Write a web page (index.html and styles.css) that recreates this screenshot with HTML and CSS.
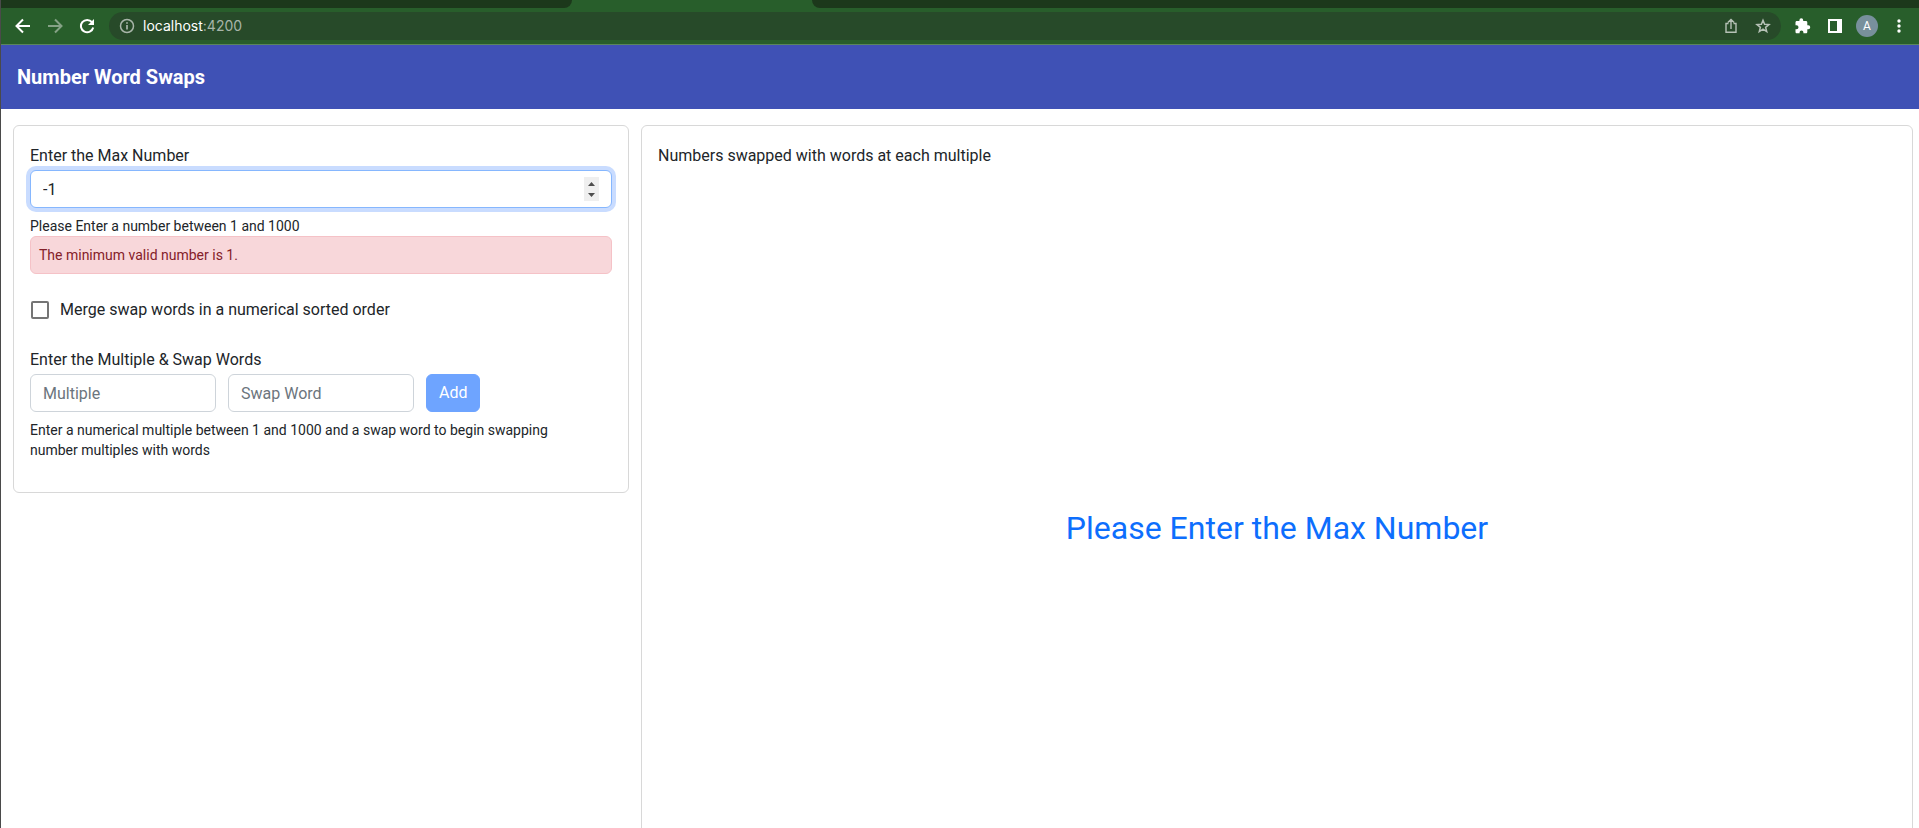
FILE: index.html
```html
<!DOCTYPE html>
<html lang="en">
<head>
<meta charset="utf-8">
<title>Number Word Swaps</title>
<link rel="stylesheet" href="styles.css">
</head>
<body>
<div class="window">
  <div class="tabs"><div class="tabs-before"></div><div class="tabs-after"></div></div>
  <div class="toolbar">
    <div class="nav">
      <button class="tool" aria-label="Back"><svg width="16" height="16" viewBox="0 0 16 16"><path d="M15 8H2M8 1.500 1.500 8 8 14.500" fill="none" stroke="#fff" stroke-width="2"/></svg></button>
      <button class="tool" aria-label="Forward"><svg width="16" height="16" viewBox="0 0 16 16"><path d="M1 8H14M8 1.500 14.500 8 8 14.500" fill="none" stroke="#85a286" stroke-width="2"/></svg></button>
      <button class="tool" aria-label="Reload"><svg width="16" height="16" viewBox="0 0 16 16"><path d="M13 4.200A6.200 6.200 0 1 0 14.200 9.500" fill="none" stroke="#fff" stroke-width="2"/><path d="M15 1V7H9Z" fill="#fff"/></svg></button>
    </div>
    <div class="address">
      <svg width="16" height="16" viewBox="0 0 16 16"><circle cx="8" cy="8" r="6.500" fill="none" stroke="#a8b5a9" stroke-width="1.500"/><path d="M8 7V11.500M8 4.200V5.800" stroke="#a8b5a9" stroke-width="1.700"/></svg>
      <span class="url">localhost<span class="port">:4200</span></span>
      <button class="tool" aria-label="Share"><svg width="16" height="16" viewBox="-1 0 16 16"><path d="M4.500 5.500H2V14.300H12V5.500H9.500M7 11V2M3.800 4.600 7 1.500 10.200 4.600" fill="none" stroke="#b6c1b6" stroke-width="1.400"/></svg></button>
      <button class="tool" aria-label="Bookmark"><svg width="16" height="16" viewBox="0 0 16 16"><path d="M8 2.200 9.600 6.200 14 6.500 10.600 9.300 11.700 13.600 8 11.200 4.300 13.600 5.400 9.300 2 6.500 6.400 6.200Z" fill="none" stroke="#b6c1b6" stroke-width="1.500"/></svg></button>
    </div>
    <div class="extras">
      <button class="tool" aria-label="Extensions"><svg width="16" height="16" viewBox="0 0 16 16"><path d="M13.300 7.300h-1V4.500c0-.8-.6-1.400-1.400-1.400H8.200V2.200a1.900 1.900 0 0 0-3.800 0v.9H1.900C1.100 3.100.5 3.700.5 4.500v2.700h1a2 2 0 0 1 0 4h-1v2.700c0 .8.600 1.400 1.400 1.400h2.700v-1a1.900 1.900 0 0 1 3.800 0v1h2.500c.8 0 1.400-.6 1.400-1.400v-2.700h1a1.950 1.950 0 0 0 0-3.900Z" fill="#fff"/></svg></button>
      <button class="tool" aria-label="Side panel"><svg width="14" height="14" viewBox="0 0 14 14"><path d="M0 0H14V14H0ZM2 2V12H9V2Z" fill="#fff" fill-rule="evenodd"/></svg></button>
      <button class="avatar" aria-label="Profile A">A</button>
      <button class="tool" aria-label="Menu"><svg width="4" height="16" viewBox="0 0 4 16"><circle cx="2" cy="3" r="1.700" fill="#fff"/><circle cx="2" cy="8" r="1.700" fill="#fff"/><circle cx="2" cy="13" r="1.700" fill="#fff"/></svg></button>
    </div>
  </div>
  <header class="app-bar"><h1 class="app-title">Number Word Swaps</h1></header>
  <main class="content">
    <form class="card">
      <label class="label" for="max">Enter the Max Number</label>
      <div class="number-field">
        <input class="field field-focus" id="max" type="number" value="-1">
        <svg class="spinner" width="15" height="24" viewBox="0 0 15 24"><rect width="15" height="24" fill="#efefef"/><path d="M4 9 7.500 5 11 9ZM4 16 7.500 20 11 16Z" fill="#4d4d4d"/></svg>
      </div>
      <p class="help">Please Enter a number between 1 and 1000</p>
      <div class="alert" role="alert">The minimum valid number is 1.</div>
      <div class="check-row">
        <input class="check" id="merge" type="checkbox">
        <label for="merge">Merge swap words in a numerical sorted order</label>
      </div>
      <label class="label" for="multiple">Enter the Multiple &amp; Swap Words</label>
      <div class="swap-row">
        <input class="field" id="multiple" type="number" placeholder="Multiple">
        <input class="field" type="text" placeholder="Swap Word" aria-label="Swap Word">
        <button class="add" type="button">Add</button>
      </div>
      <p class="help">Enter a numerical multiple between 1 and 1000 and a swap word to begin swapping number multiples with words</p>
    </form>
    <section class="card">
      <p class="label">Numbers swapped with words at each multiple</p>
      <p class="message">Please Enter the Max Number</p>
    </section>
  </main>
</div>
</body>
</html>
```
FILE: styles.css
```css
* { box-sizing: border-box; }
body { margin: 0; background: #fff; color: #212529; font: 16px/24px Roboto, sans-serif; }
p, h1 { margin: 0; }
input, button { font: inherit; color: inherit; }
.window { display: flex; flex-direction: column; height: 100vh; overflow: hidden; border-left: 1px solid #4a4a4a; }
.tabs { flex: none; display: flex; justify-content: space-between; height: 8px; background: #285e2b; }
.tabs-before, .tabs-after { background: #1c381b; }
.tabs-before { width: 571px; border-bottom-right-radius: 8px; }
.tabs-after { width: calc(100% - 811px); border-bottom-left-radius: 8px; }
.toolbar { flex: none; display: flex; align-items: center; height: 37px; padding: 0 4px 0 14px; background: #285e2b; border-bottom: 1px solid #5a865c; }
.nav { display: flex; gap: 16px; }
.tool { display: flex; align-items: center; padding: 0; border: 0; background: none; }
.address { flex: 1; display: flex; align-items: center; gap: 16px; height: 28px; margin: 0 6px 0 14px; padding: 0 10px; border-radius: 14px; background: #274a29; }
.url { flex: 1; margin-left: -8px; color: #fff; font-family: Inter, sans-serif; font-size: 14px; }
.port { color: #a8b5a9; }
.extras { display: grid; grid-template-columns: repeat(4, 32px); align-items: center; justify-items: center; }
.avatar { width: 22px; height: 22px; padding: 0; border: 0; border-radius: 50%; background: #78909c; color: #fff; font-size: 12px; line-height: 22px; }
.app-bar { flex: none; display: flex; align-items: center; height: 64px; padding: 0 16px; background: #3f51b5; color: #fff; }
.app-title { font-size: 20px; line-height: 32px; font-weight: 700; }
.content { flex: 1; display: grid; grid-template-columns: 77fr 159fr; gap: 12px; align-items: start; padding: 16px 6px 0 12px; }
.card { padding: 18px 16px 32px; border: 1px solid #d8d8d8; border-radius: 6px; }
.label { display: block; }
.field { display: block; width: 186px; height: 38px; margin: 0; padding: 6px 12px; border: 1px solid #ced4da; border-radius: 6px; background: #fff; outline: 0; appearance: textfield; }
.field::placeholder { color: #6c757d; opacity: 1; }
.field::-webkit-inner-spin-button { appearance: none; margin: 0; }
.number-field { position: relative; margin-top: 2px; }
.field-focus { width: 100%; border-color: #86b7fe; box-shadow: 0 0 0 4px #c9dcff; }
.spinner { position: absolute; top: 7px; right: 13px; }
.help { max-width: 560px; margin-top: 8px; font-size: 14px; line-height: 20px; }
.alert { padding: 8px; border: 1px solid #f5c2c7; border-radius: 6px; background: #f8d7da; color: #842029; font-size: 14px; line-height: 20px; }
.check-row { display: flex; align-items: center; gap: 11px; margin: 24px 0 26px; padding-left: 1px; }
.check { appearance: none; width: 18px; height: 18px; margin: 0; border: 2px solid #757575; border-radius: 2px; }
.swap-row { display: flex; gap: 12px; margin-top: 2px; }
.add { padding: 6px 12px; border: 1px solid #6ea4ff; border-radius: 6px; background: #6ea4ff; color: #fff; }
.message { padding: 340px 0; color: #0d6efd; font-size: 32px; line-height: 40px; text-align: center; }
```
